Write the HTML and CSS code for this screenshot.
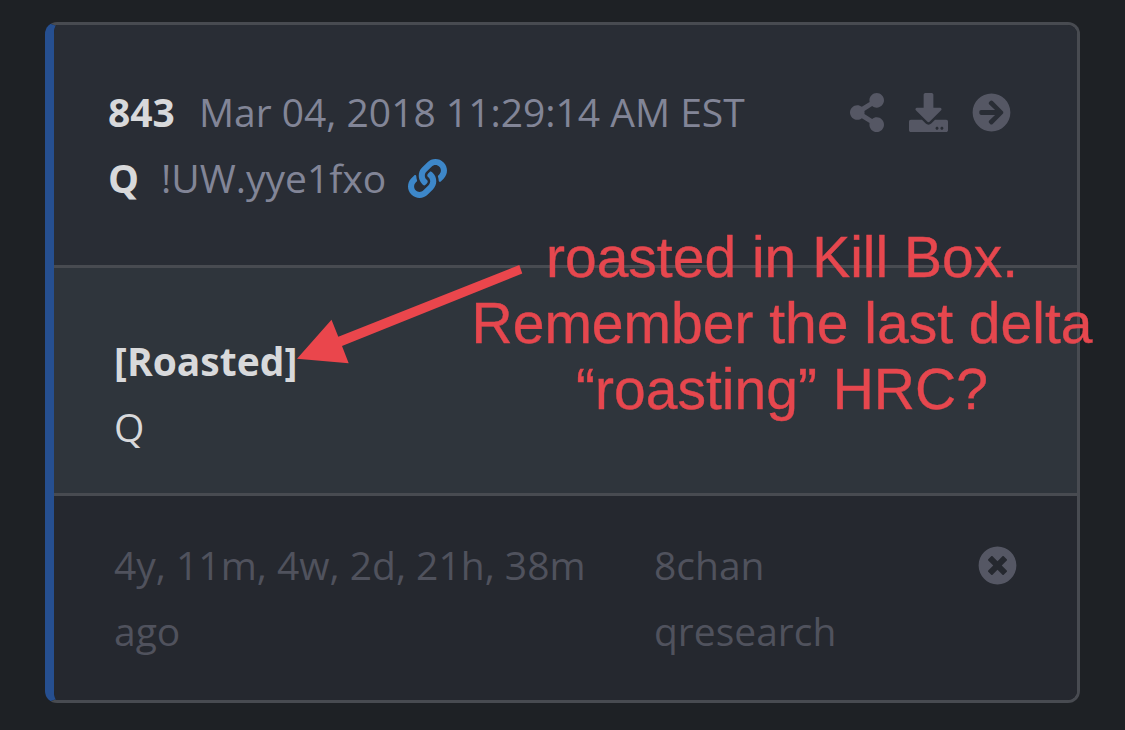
FILE: index.html
```html
<!DOCTYPE html>
<html lang="en">
<head>
<meta charset="utf-8">
<title>Post 843</title>
<link rel="stylesheet" href="styles.css">
</head>
<body>
<article class="card">
  <header class="head">
    <div class="meta">
      <div class="line"><b class="num">843</b><span class="date">Mar 04, 2018 11:29:14 AM EST</span></div>
      <div class="line"><b class="author">Q</b><span class="trip">!UW.yye1fxo</span>
        <svg class="link" viewBox="0 0 512 512"><path d="M326.612 185.391c59.747 59.809 58.927 155.698.36 214.59-.11.12-.24.25-.36.37l-67.2 67.2c-59.27 59.27-155.699 59.262-214.96 0-59.27-59.26-59.27-155.7 0-214.96l37.106-37.106c9.84-9.84 26.786-3.3 27.294 10.606.648 17.722 3.826 35.527 9.69 52.721 1.986 5.822.567 12.262-3.783 16.612l-13.087 13.087c-28.026 28.026-28.905 73.66-1.155 101.96 28.024 28.579 74.086 28.749 102.325.51l67.2-67.19c28.191-28.191 28.073-73.757 0-101.83-3.701-3.694-7.429-6.564-10.341-8.569a16.037 16.037 0 0 1-6.947-12.606c-.396-10.567 3.348-21.456 11.698-29.806l21.054-21.055c5.521-5.521 14.182-6.199 20.584-1.731a152.482 152.482 0 0 1 20.522 17.197zM467.547 44.449c-59.261-59.262-155.69-59.27-214.96 0l-67.2 67.2c-.12.12-.25.25-.36.37-58.566 58.892-59.387 154.781.36 214.59a152.454 152.454 0 0 0 20.521 17.196c6.402 4.468 15.064 3.789 20.584-1.731l21.054-21.055c8.35-8.35 12.094-19.239 11.698-29.806a16.037 16.037 0 0 0-6.947-12.606c-2.912-2.005-6.64-4.875-10.341-8.569-28.073-28.073-28.191-73.639 0-101.83l67.2-67.19c28.239-28.239 74.3-28.069 102.325.51 27.75 28.3 26.872 73.934-1.155 101.96l-13.087 13.087c-4.35 4.35-5.769 10.79-3.783 16.612 5.864 17.194 9.042 34.999 9.69 52.721.509 13.906 17.454 20.446 27.294 10.606l37.106-37.106c59.271-59.259 59.271-155.699.001-214.959z"/></svg>
      </div>
    </div>
    <div class="actions">
      <svg class="share" viewBox="0 0 448 512"><path d="M352 320c-22.608 0-43.387 7.819-59.79 20.895l-102.486-64.054a96.551 96.551 0 0 0 0-41.683l102.486-64.054C308.613 184.181 329.392 192 352 192c53.019 0 96-42.981 96-96S405.019 0 352 0s-96 42.981-96 96c0 7.158.79 14.13 2.276 20.841L155.79 180.895C139.387 167.819 118.608 160 96 160c-53.019 0-96 42.981-96 96s42.981 96 96 96c22.608 0 43.387-7.819 59.79-20.895l102.486 64.054A96.301 96.301 0 0 0 256 416c0 53.019 42.981 96 96 96s96-42.981 96-96-42.981-96-96-96z"/></svg>
      <svg class="icon" viewBox="0 0 512 512"><path d="M216 0h80c13.3 0 24 10.7 24 24v168h87.7c17.8 0 26.7 21.5 14.1 34.1L269.7 378.3c-7.5 7.5-19.8 7.5-27.3 0L90.1 226.1c-12.6-12.6-3.7-34.1 14.1-34.1H192V24c0-13.3 10.7-24 24-24zm296 376v112c0 13.3-10.7 24-24 24H24c-13.3 0-24-10.7-24-24V376c0-13.3 10.7-24 24-24h146.7l49 49c20.1 20.1 52.5 20.1 72.6 0l49-49H488c13.3 0 24 10.7 24 24zm-124 88c0-11-9-20-20-20s-20 9-20 20 9 20 20 20 20-9 20-20zm64 0c0-11-9-20-20-20s-20 9-20 20 9 20 20 20 20-9 20-20z"/></svg>
      <svg class="icon" viewBox="0 0 512 512"><path d="M256 8c137 0 248 111 248 248S393 504 256 504 8 393 8 256 119 8 256 8zm-28.9 143.6l75.5 72.4H120c-13.3 0-24 10.7-24 24v16c0 13.3 10.7 24 24 24h182.6l-75.5 72.4c-9.7 9.3-9.9 24.8-.4 34.3l11 10.9c9.4 9.4 24.6 9.4 33.9 0L404.3 273c9.4-9.4 9.4-24.6 0-33.9L271.6 106.3c-9.4-9.4-24.6-9.4-33.9 0l-11 10.9c-9.5 9.6-9.3 25.1.4 34.4z"/></svg>
    </div>
  </header>
  <section class="body">
    <div><b>[Roasted]</b></div>
    <div>Q</div>
  </section>
  <footer class="foot">
    <div class="age">4y, 11m, 4w, 2d, 21h, 38m ago</div>
    <div class="board">8chan<br>qresearch</div>
    <svg class="icon close" viewBox="0 0 512 512"><path d="M256 8C119 8 8 119 8 256s111 248 248 248 248-111 248-248S393 8 256 8zm121.6 313.1c4.7 4.7 4.7 12.3 0 17L338 377.6c-4.7 4.7-12.3 4.7-17 0L256 312l-65.1 65.6c-4.7 4.7-12.3 4.7-17 0L134.4 338c-4.7-4.7-4.7-12.3 0-17l65.6-65-65.6-65.1c-4.7-4.7-4.7-12.3 0-17l39.6-39.6c4.7-4.7 12.3-4.7 17 0l65 65.7 65.1-65.6c4.7-4.7 12.3-4.7 17 0l39.6 39.6c4.7 4.7 4.7 12.3 0 17L312 256l65.6 65.1z"/></svg>
  </footer>
</article>
<svg class="arrow" viewBox="0 0 240 120"><path d="M7 108.700 41.500 69.700 48.300 86.700 229.300 15 232.300 23.500 52 96 58.700 113.300z"/></svg>
<div class="note"><div>roasted in Kill Box.</div><div>Remember the last delta</div><div>“roasting” HRC?</div></div>
</body>
</html>
```
FILE: styles.css
```css
* { box-sizing: border-box; }
body {
  margin: 0;
  height: 730px;
  padding: 22px 45px 27px;
  overflow: hidden;
  background: #1e2125;
  font: 39px/66px "Open Sans", "Noto Sans", sans-serif;
  color: #d8d9db;
}
svg { display: block; fill: currentColor; flex: none; }
.card {
  height: 681px;
  border: 3px solid #484b51;
  border-left: 9px solid #264f90;
  border-radius: 12px;
  overflow: hidden;
}
.head {
  display: flex;
  justify-content: space-between;
  height: 243px;
  padding: 54px 66px 54px 54px;
  background: #292d35;
  border-bottom: 3px solid #484b51;
}
.line { display: flex; align-items: center; white-space: nowrap; }
.date, .trip { color: #828597; }
.date { margin-left: 24px; }
.trip { margin-left: 22px; }
.link { width: 39px; height: 39px; margin-left: 22px; color: #3d87c9; }
.actions { display: flex; height: 66px; align-items: center; gap: 24px; color: #555764; }
.icon { width: 39px; height: 39px; }
.share { width: 34px; height: 39px; margin-right: 1px; }
.body {
  height: 228px;
  padding: 60px 60px 33px;
  background: #2f353c;
  border-bottom: 3px solid #484b51;
}
.foot {
  display: flex;
  height: 204px;
  padding: 36px 60px;
  background: #25282f;
  color: #50525d;
}
.age { width: 540px; padding-right: 60px; }
.close { margin: 14px 0 0 auto; color: #555764; }
.arrow { position: absolute; left: 290px; top: 250px; width: 240px; height: 120px; color: #ea464c; }
.note {
  position: absolute;
  left: 462px;
  top: 224px;
  width: 640px;
  text-align: center;
  white-space: nowrap;
  font: 57px/66px "Liberation Sans", sans-serif;
  color: #e6474e;
  -webkit-text-stroke: 0.4px #e6474e;
}
```
